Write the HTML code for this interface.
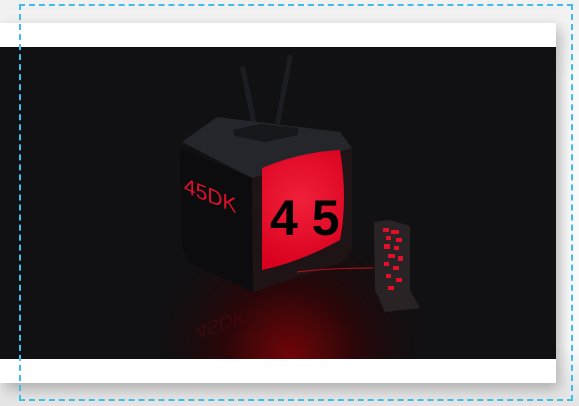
<!DOCTYPE html>
<html><head><style>
html,body{margin:0;padding:0;width:579px;height:406px;overflow:hidden;background:#fafafa;font-family:"Liberation Sans",sans-serif}
.bg{position:absolute;inset:0;background:linear-gradient(#f0f0f0,#fafafa 20%,#fafafa 85%,#e4e4e4)}
.card{position:absolute;left:0;top:23px;width:556px;height:360px;background:#fff;box-shadow:4px 6px 14px rgba(0,0,0,.28)}
.dash{position:absolute;left:19px;top:4px;width:554px;height:397px;border:2px dashed #3fbce8;box-sizing:border-box;pointer-events:none}
svg{position:absolute;left:0;top:47px}
</style></head><body>
<div class="bg"></div>
<div class="card"></div>
<svg width="556" height="312" viewBox="0 47 556 312">
<defs>
<radialGradient id="fl" cx="290" cy="355" r="150" gradientUnits="userSpaceOnUse"><stop offset="0" stop-color="#700508"/><stop offset=".45" stop-color="#2a0608"/><stop offset="1" stop-color="#0e0e10" stop-opacity="0"/></radialGradient>
<radialGradient id="sc" cx="300" cy="200" r="70" gradientUnits="userSpaceOnUse"><stop offset="0" stop-color="#f0203a"/><stop offset="1" stop-color="#d8001e"/></radialGradient>
</defs>
<rect x="0" y="47" width="556" height="312" fill="#111113"/>
<rect x="0" y="47" width="556" height="312" fill="url(#fl)"/>
<polygon points="240,67 245,66 258,130 253,131" fill="#1c1d22"/>
<polygon points="288,55 293,56 280,124 275,123" fill="#1c1d22"/>
<polygon points="182,142 217,117 340,132 352,148 252,178" fill="#24262c"/>
<polygon points="233,130 260,124 298,128 298,135 265,142 235,136" fill="#16171b"/>
<polygon points="180,148 252,178 253,292 188,262 182,245" fill="#0c0c0e"/>
<polygon points="252,178 352,148 352,250 342,262 253,292" fill="#1e1416"/>
<path d="M262,168 Q300,152 340,150 Q348,200 340,240 Q300,262 262,270 Z" fill="url(#sc)"/>
<text x="0" y="0" fill="#e0102a" font-size="21" transform="translate(184,192) skewY(22)" style="font-family:'Liberation Sans',sans-serif">45DK</text>
<text x="270" y="235" fill="#000" font-size="50" font-weight="bold" style="font-family:'Liberation Sans',sans-serif">4 5</text>
<path d="M297,272 Q330,268 373,268" stroke="#c0101a" stroke-width="1" fill="none"/>
<polygon points="374,222 390,220 410,226 410,290 420,308 385,312 375,290" fill="#2a2326"/>
<g fill="#e0102a">
<rect x="383" y="228" width="6" height="4"/><rect x="391" y="230" width="8" height="4"/><rect x="386" y="236" width="5" height="4"/><rect x="396" y="238" width="6" height="4"/><rect x="384" y="244" width="6" height="5"/><rect x="394" y="246" width="5" height="4"/><rect x="388" y="254" width="7" height="4"/><rect x="398" y="256" width="5" height="5"/><rect x="384" y="262" width="5" height="4"/><rect x="393" y="266" width="6" height="4"/><rect x="386" y="274" width="5" height="4"/><rect x="396" y="278" width="6" height="4"/><rect x="388" y="286" width="6" height="4"/>
</g>
<text x="0" y="0" fill="#4a0a0e" font-size="20" transform="translate(196,326) skewY(-20) scale(1,-1)" opacity=".6">45DK</text>
</svg>
<div class="dash"></div>
</body></html>
